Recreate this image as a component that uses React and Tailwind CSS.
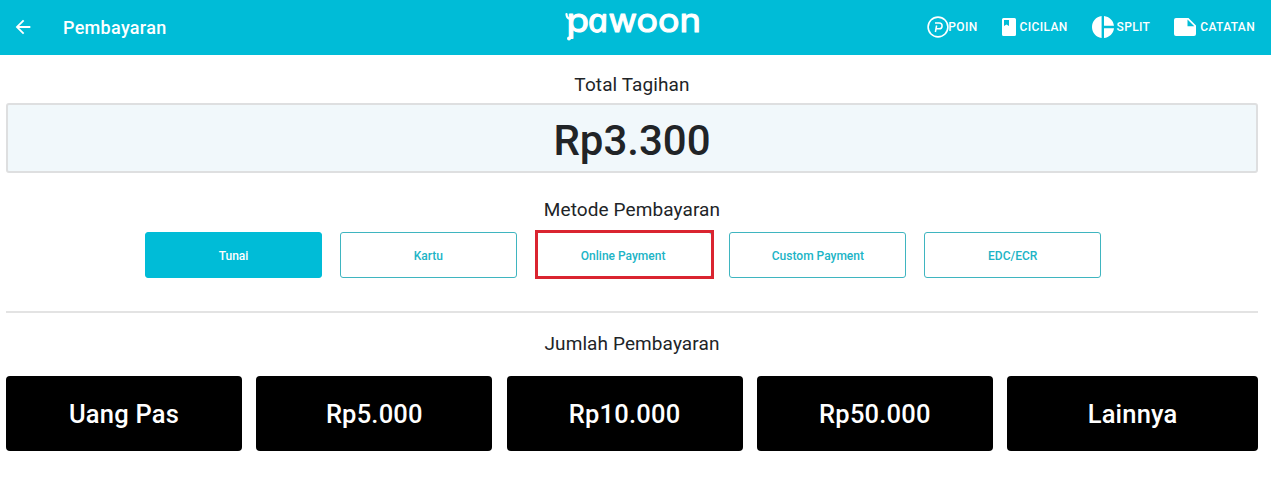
import clsx from 'clsx';
import { MdArrowBack } from 'react-icons/md';

const methods = [
  { label: 'Tunai', active: true },
  { label: 'Kartu' },
  { label: 'Online Payment', highlighted: true },
  { label: 'Custom Payment' },
  { label: 'EDC/ECR' },
];

const amounts = ['Uang Pas', 'Rp5.000', 'Rp10.000', 'Rp50.000', 'Lainnya'];

const PoinIcon = () => (
  <svg width="22" height="22" viewBox="0 0 22 22" fill="none" stroke="currentColor">
    <circle cx="11" cy="11" r="9.9" strokeWidth="1.6" />
    <path d="M8 7h4.200a2.900 2.900 0 0 1 0 5.800H9.600M9.600 9.500l-1.200 6.500" strokeWidth="1.500" />
  </svg>
);

const CicilanIcon = () => (
  <svg width="14" height="18" viewBox="0 0 14 18" fill="currentColor" fillRule="evenodd">
    <path d="M1.5 0h11A1.5 1.5 0 0 1 14 1.500v15a1.500 1.500 0 0 1-1.500 1.500h-11A1.500 1.500 0 0 1 0 16.500v-15A1.500 1.500 0 0 1 1.500 0zM2 2v6l2.500-1.600L7 8V2z" />
  </svg>
);

const SplitIcon = () => (
  <svg width="22" height="22" viewBox="0 0 22 22" fill="currentColor">
    <path d="M9.600 0v22C4 21.300 0 16.600 0 11S4 .7 9.600 0zM12 0v9.800h10C21.400 4.500 17.300.6 12 0zM12 12.200V22c5.300-.6 9.400-4.500 10-9.800z" />
  </svg>
);

const CatatanIcon = () => (
  <svg width="22" height="18" viewBox="0 0 22 18" fill="currentColor">
    <path d="M2 0h12.500L22 7.500V16a2 2 0 0 1-2 2H2a2 2 0 0 1-2-2V2a2 2 0 0 1 2-2zM13.500 1.500v6.800h6.800z" fillRule="evenodd" />
  </svg>
);

const Logo = () => (
  <svg className="mr-1.5 overflow-visible" width="138" height="55" viewBox="0 0 138 55" fill="currentColor" stroke="currentColor" strokeWidth="1.1" strokeLinejoin="round">
    <g fontFamily="Inter, sans-serif" fontWeight="400" fontSize="33">
      <text x="2.500" y="31.500" textLength="22.500" lengthAdjust="spacingAndGlyphs">p</text>
      <text transform="translate(25.500 31.500) skewX(12)" fontFamily="Open Sans, sans-serif" fontStyle="italic" textLength="20.500" lengthAdjust="spacingAndGlyphs">a</text>
      <text x="44.500" y="31.500" textLength="28.500" lengthAdjust="spacingAndGlyphs">w</text>
      <text x="72.500" y="31.500" textLength="21.500" lengthAdjust="spacingAndGlyphs">o</text>
      <text x="94" y="31.500" textLength="21.500" lengthAdjust="spacingAndGlyphs">o</text>
      <text x="115.500" y="31.500" textLength="21.500" lengthAdjust="spacingAndGlyphs">n</text>
    </g>
    <path d="M2.500 14q0 4 3.500 5" fill="none" strokeWidth="2.200" strokeLinecap="round" />
    <circle cx="5" cy="38.500" r="2" stroke="none" />
  </svg>
);

const Header = () => (
  <header className="grid h-[55px] grid-cols-[1fr_auto_1fr] items-center bg-[#00bcd7] text-white">
    <div className="flex items-center pl-3">
      <MdArrowBack className="mb-0.5 size-[22px]" />
      <h1 className="ml-[29px] text-[18px] font-medium tracking-[0.3px]">Pembayaran</h1>
    </div>

    <Logo />

    <nav className="flex items-center justify-end pr-4 pb-px text-[12px] font-medium tracking-[0.35px]">
      <span className="flex items-center"><PoinIcon /><span className="-ml-px">POIN</span></span>
      <span className="ml-6 flex items-center gap-1"><CicilanIcon />CICILAN</span>
      <span className="ml-6 flex items-center gap-[3px]"><SplitIcon />SPLIT</span>
      <span className="ml-6 flex items-center gap-1"><CatatanIcon />CATATAN</span>
    </nav>
  </header>
);

const App = () => {
  return (
    <div className="h-[499px] overflow-hidden bg-white font-['Roboto',sans-serif] text-[#212427]">
      <Header />

      <main className="pr-[13px] pl-1.5 text-center">
        <h2 className="pt-[18px] text-[19px] leading-6 tracking-[0.1px]">Total Tagihan</h2>
        <div className="mt-[6px] flex h-[70px] items-center justify-center rounded-[3px] border-2 border-[#dedfe0] bg-[#f1f8fb] pt-1 text-[42px] font-medium">
          Rp3.300
        </div>

        <h2 className="mt-[25px] text-[19px] leading-6 tracking-[0.1px]">Metode Pembayaran</h2>
        <div className="mt-[10px] ml-[139px] flex gap-[17.8px]">
          {methods.map(({ label, active, highlighted }) => (
            <button
              key={label}
              type="button"
              className={clsx(
                'relative h-[46px] w-[177px] rounded-[3px] border pt-px text-[12px] font-medium',
                active ? 'border-[#00bcd7] bg-[#00bcd7] text-white' : 'border-[#3fb5c0] text-[#20b4c6]'
              )}
            >
              {label}
              {highlighted && <span className="absolute -top-[3px] -right-[3px] -bottom-[2px] -left-[1px] border-3 border-[#da2430]" />}
            </button>
          ))}
        </div>

        <hr className="mt-[33px] border-t-2 border-[#e3e3e3]" />

        <h2 className="mt-[19px] text-[19px] leading-6 tracking-[0.1px]">Jumlah Pembayaran</h2>
        <div className="mt-5 grid grid-cols-[236px_236px_236px_236px_1fr] gap-[14.3px]">
          {amounts.map((amount) => (
            <button key={amount} type="button" className="h-[75px] rounded-[4px] bg-black pt-0.5 text-[25.5px] font-medium tracking-[0.2px] text-white">
              {amount}
            </button>
          ))}
        </div>
      </main>
    </div>
  );
};

export default App;
